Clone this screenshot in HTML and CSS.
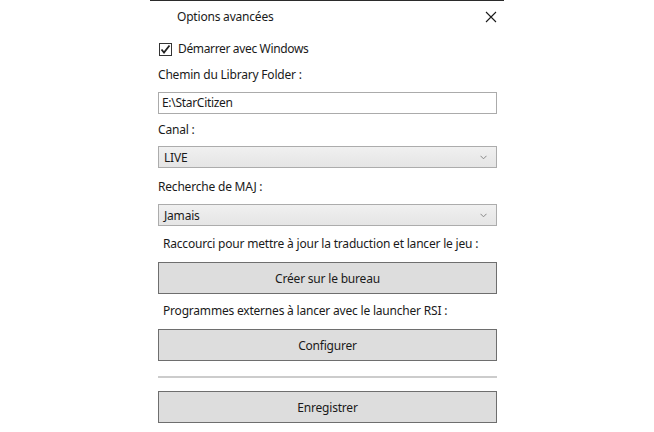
FILE: index.html
```html
<!DOCTYPE html>
<html lang="fr">
<head>
<meta charset="utf-8">
<title>Options avancées</title>
<link rel="stylesheet" href="styles.css">
</head>
<body>
<div class="window">
  <div class="titlebar">
    <span class="title">Options avancées</span>
    <svg class="close" width="12" height="12" viewBox="0 0 12 12"><path d="M1 1 L11 11 M11 1 L1 11" stroke="#1a1a1a" stroke-width="1.1" fill="none"/></svg>
  </div>
  <div class="content">
    <div class="row check-row">
      <span class="checkbox"><svg width="11" height="11" viewBox="0 0 11 11"><path d="M1.5 5.5 L4 8.5 L9.5 1.5" stroke="#222" stroke-width="1.8" fill="none"/></svg></span>
      <span>Démarrer avec Windows</span>
    </div>
    <div class="row label l-chemin">Chemin du Library Folder :</div>
    <div class="input">E:\StarCitizen</div>
    <div class="row label l-canal">Canal :</div>
    <div class="combo"><span>LIVE</span><svg class="chev" width="7" height="5" viewBox="0 0 7 5"><path d="M0.5 0.8 L3.5 3.8 L6.5 0.8" stroke="#888" stroke-width="1" fill="none"/></svg></div>
    <div class="row label l-maj">Recherche de MAJ :</div>
    <div class="combo combo-maj"><span>Jamais</span><svg class="chev" width="7" height="5" viewBox="0 0 7 5"><path d="M0.5 0.8 L3.5 3.8 L6.5 0.8" stroke="#888" stroke-width="1" fill="none"/></svg></div>
    <div class="row label indent l-raccourci">Raccourci pour mettre à jour la traduction et lancer le jeu :</div>
    <div class="button b-creer">Créer sur le bureau</div>
    <div class="row label indent l-prog">Programmes externes à lancer avec le launcher RSI :</div>
    <div class="button b-conf">Configurer</div>
    <div class="separator"></div>
    <div class="button b-save">Enregistrer</div>
  </div>
</div>
</body>
</html>
```

FILE: styles.css
```css
html, body {
  margin: 0;
  padding: 0;
  background: #ffffff;
}
body {
  font-family: "Noto Sans", "Open Sans", sans-serif;
  font-size: 12px;
  color: #1a1a1a;
}
.window {
  margin-left: 150px;
  width: 354px;
  height: 432px;
  border-top: 1px solid #2b2b2b;
  box-sizing: border-box;
  background: #fff;
}
.titlebar {
  height: 31px;
  display: flex;
  align-items: center;
  justify-content: space-between;
  padding-left: 27px;
  padding-right: 7px;
}
.title {
  line-height: 16px;
  letter-spacing: -0.2px;
}
.content {
  padding-left: 8px;
  padding-right: 7px;
  display: flex;
  flex-direction: column;
}
.row {
  height: 16px;
  line-height: 16px;
  letter-spacing: -0.2px;
}
.check-row {
  margin-top: 9px;
  display: flex;
  align-items: center;
  gap: 6px;
  letter-spacing: -0.35px;
}
.checkbox {
  width: 11px;
  height: 11px;
  border: 1px solid #333;
  margin-left: 1px;
  display: flex;
  align-items: center;
  justify-content: center;
  background: #fff;
}
.l-chemin { margin-top: 10px; }
.input {
  margin-top: 9px;
  height: 22px;
  box-sizing: border-box;
  border: 1px solid #ababab;
  padding-left: 3px;
  line-height: 20px;
  letter-spacing: -0.3px;
}
.l-canal { margin-top: 8px; }
.combo {
  margin-top: 8px;
  height: 22px;
  box-sizing: border-box;
  border: 1px solid #acacac;
  background: linear-gradient(#f0f0f0, #e5e5e5);
  display: flex;
  align-items: center;
  justify-content: space-between;
  padding-left: 5px;
  padding-right: 9px;
  letter-spacing: -0.2px;
}
.l-maj { margin-top: 11px; }
.combo-maj { margin-top: 9px; }
.indent { padding-left: 5px; }
.l-raccourci { margin-top: 10px; }
.button {
  height: 32px;
  box-sizing: border-box;
  border: 1px solid #6e6e6e;
  background: #dddddd;
  display: flex;
  align-items: center;
  justify-content: center;
  letter-spacing: -0.2px;
}
.b-creer { margin-top: 10px; }
.l-prog { margin-top: 9px; }
.b-conf { margin-top: 10px; }
.separator {
  margin-top: 15px;
  height: 2px;
  background: #cccccc;
}
.b-save { margin-top: 13px; }
```
